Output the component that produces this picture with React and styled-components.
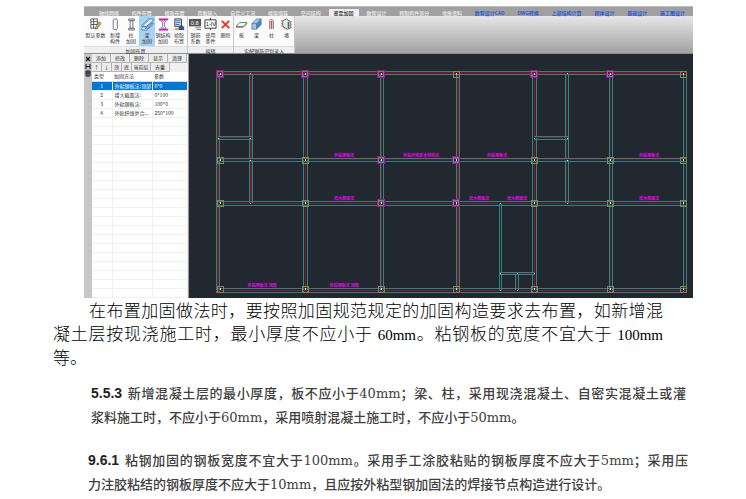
import React from 'react';
import styled, { createGlobalStyle } from 'styled-components';

const GlobalStyle = createGlobalStyle`
  * {
    box-sizing: border-box;
  }

  body {
    margin: 0;
    background: white;
    font-family: 'Noto Sans CJK SC', sans-serif;
  }

  button {
    margin: 0;
    border: 0;
    background: transparent;
    font-family: inherit;
    color: inherit;
  }
`;

const Page = styled.main`
  padding: 6px 53px 6px 53px;
`;

const AppWindow = styled.section`
  margin-left: 31px;
  font-size: 5px;
  color: #333;
`;

const TabBar = styled.nav`
  display: flex;
  justify-content: space-between;
  align-items: flex-end;
  height: 10px;
  padding: 0 3px 0 10px;
  background: #a0a0a0;
  border-top: 1px solid #bcc0bc;
`;

const Tab = styled.button`
  height: 7px;
  padding: 0 5px;
  font-size: 5px;
  font-weight: 500;
  line-height: 7px;
  white-space: nowrap;
  color: ${props => (props.$active ? '#222' : props.$link ? '#1450e0' : '#ececec')};
  background: ${props => (props.$active ? '#eeeeee' : 'transparent')};
`;

const Ribbon = styled.div`
  display: flex;
  height: 38px;
  background: linear-gradient(#e6e6e6, #a2a2a2);
  border-bottom: 1px solid #8a8c8e;
`;

const RibbonGroup = styled.div`
  display: flex;
  flex-direction: column;
  background: #fbfbfb;
  border-right: 1px solid #c8c8c8;
`;

const GroupTools = styled.div`
  display: flex;
  height: 30px;
`;

const GroupTitle = styled.div`
  height: 7px;
  line-height: 7px;
  text-align: center;
  white-space: nowrap;
  background: #efefef;
  border-top: 1px solid #dddddd;
`;

const toolWidths = { wide: '23px', medium: '16px', narrow: '15px' };

const Tool = styled.button`
  display: flex;
  flex-direction: column;
  align-items: center;
  width: ${props => toolWidths[props.$size]};
  padding: 2px 0 0;
  font-size: 5px;
  line-height: 6px;
  white-space: nowrap;
  color: #333;
  background: ${props => (props.$active ? '#a6d3f3' : 'transparent')};

  svg {
    display: block;
    width: 13px;
    height: 13px;
    margin-bottom: 1px;
  }
`;

const Workspace = styled.div`
  display: flex;
  background: #212830;
`;

const PaletteBar = styled.div`
  display: flex;
  flex-direction: column;
  width: 8px;
  padding: 2px 1px;
  background: #c6c6c6;
`;

const Palette = styled.div`
  flex: none;
  width: 97px;
  background: #f0f0f0;
  border-right: 1px solid #9a9a9a;
`;

const PaletteRow = styled.div`
  display: flex;
  height: 9px;
`;

const PaletteButton = styled.button`
  width: ${props => (props.$small ? '10px' : '19px')};
  padding: 0;
  font-size: 5px;
  line-height: 8px;
  background: #ececec;
  border-right: 1px solid #b4b4b4;
  border-bottom: 1px solid #b4b4b4;
`;

const MethodTable = styled.table`
  width: 100%;
  border-collapse: collapse;
  table-layout: fixed;
  background: white;
  font-size: 5px;
  line-height: 8px;
`;

const HeadCell = styled.th`
  width: ${props => props.$width};
  height: 9px;
  padding: 0 2px;
  font-weight: 400;
  text-align: left;
  border-bottom: 1px solid #d8d8d8;
`;

const Cell = styled.td`
  height: 9px;
  padding: 0 2px;
  overflow: hidden;
  white-space: nowrap;
  text-align: ${props => (props.$center ? 'center' : 'left')};
  color: ${props => (props.$selected ? 'white' : '#333')};
  background: ${props => (props.$selected ? '#0078d7' : 'white')};
  border-right: 1px solid #f0f0f0;
  border-bottom: 1px solid #f0f0f0;
`;

const Drawing = styled.svg`
  display: block;
  flex: 1;
  min-width: 0;
  font-family: 'Noto Sans CJK SC', sans-serif;
`;

const Paragraph = styled.p`
  margin: 2px 30px 0 0;
  font-family: 'Liberation Serif', 'Noto Sans CJK SC', serif;
  font-size: 17px;
  font-weight: 300;
  line-height: 23px;
  text-indent: 36px;
  text-align: justify;
  color: black;
`;

const Measure = styled.span`
  font-size: 15px;
  font-weight: 400;
`;

const Clause = styled.p`
  margin: ${props => (props.$first ? '11px 7px 0 38px' : '18px 5px 0 35px')};
  font-family: 'DejaVu Serif', 'Noto Sans CJK SC', serif;
  font-size: 13px;
  font-weight: 500;
  line-height: 24px;
  text-align: justify;
  color: #404040;
`;

const ClauseNumber = styled.strong`
  margin-right: 5px;
  font-family: 'Liberation Sans', sans-serif;
  font-size: 14px;
  color: #222;
`;

const Phrase = styled.span`
  white-space: nowrap;
`;

const icons = {
  params: (
    <>
      <path d="M2 1h7v10H2zM2 4h7M2 7h7M5 1v10" fill="#fff" stroke="#555" />
      <path d="M11 4l2 2-4 5-2 1 0-2z" fill="#d8a860" stroke="#444" strokeWidth=".6" />
    </>
  ),
  member: <rect x="4.500" y="1" width="4.500" height="11.500" rx="1.500" fill="#f4f7fa" stroke="#66788a" />,
  column: (
    <>
      <path d="M4 1h6v2H4zM4 11h6v2H4z" fill="#d4dae0" stroke="#4c5966" strokeWidth=".8" />
      <path d="M5.500 3h3v8h-3z" fill="#edf1f4" stroke="#4c5966" strokeWidth=".8" />
    </>
  ),
  beam: (
    <>
      <path d="M1 8L8 1h5v2L6 9H1zM1 11l2-2 3 3 7-7v2l-7 6H1z" fill="#e5f2fc" stroke="#2868a8" strokeWidth=".8" />
      <path d="M2 8L9 2M4 12l8-7" stroke="#2868a8" strokeWidth=".7" />
    </>
  ),
  steel: (
    <>
      <path d="M2 1.500h10M2 12.500h10" stroke="#e400e4" strokeWidth="1.800" />
      <path d="M4 3h6L8 5v4l2 2H4l2-2V5z" fill="#eee" stroke="#666" strokeWidth=".8" />
    </>
  ),
  pick: (
    <>
      <path d="M2 1h7v8H2z" fill="#dbe9f7" stroke="#333" />
      <path d="M3 3h5M3 5h5M3 7h4" stroke="#2871bd" />
      <path d="M9 7l3 3v3H6V10z" fill="#27558f" />
      <path d="M2 11h4v2H2z" fill="#d89030" />
    </>
  ),
  factor: (
    <>
      <rect x="0" y="1" width="13" height="8" fill="#555" />
      <text x="2" y="7" fontSize="6" fill="#fff" fontFamily="Liberation Sans, sans-serif">0.8</text>
      <path d="M7 10.500h6M8 12.500h5" stroke="#777" />
    </>
  ),
  usage: (
    <>
      <path d="M1 2h12v9H1z" fill="#fff" stroke="#333" />
      <text x="2" y="9" fontSize="6" fill="#111" fontFamily="Liberation Sans, sans-serif">1-IV</text>
      <path d="M7 0v2M7 11v2" stroke="#333" />
    </>
  ),
  remove: <path d="M3 3l8 8M11 3l-8 8" stroke="#ef3525" strokeWidth="2" />,
  slab: (
    <>
      <path d="M1 9l4-4h8l-4 4z" fill="#fff" stroke="#39815b" />
      <path d="M1 10h8l4-4" fill="none" stroke="#bd3e38" strokeWidth=".8" />
    </>
  ),
  box: (
    <>
      <path d="M2 6l5-5h5v6l-5 5H2z" fill="#a7c5ec" stroke="#47617d" strokeWidth=".7" />
      <path d="M2 6h5l5-5M7 6v6" fill="none" stroke="#47617d" strokeWidth=".7" />
      <path d="M7 6l5-5v6l-5 5z" fill="#4b80cb" />
    </>
  ),
  rebar: (
    <>
      <path d="M5 12V3l2-2 2 2v9" fill="#eee" stroke="#777" />
      <path d="M7 12V3" stroke="#e45045" strokeWidth="1.500" />
    </>
  ),
  wall: (
    <>
      <path d="M3 3l4-2 4 3v7l-3 1-5-3z" fill="#e7eee9" stroke="#476b59" />
      <path d="M9 4v7" stroke="#32765b" strokeWidth="1.500" />
      <path d="M2 2v7l5 4M12 3v8" fill="none" stroke="#da4941" strokeWidth=".9" strokeDasharray="2 1" />
    </>
  ),
};

const tabs = [
  '轴线网格', '构件布置', '楼板布置', '荷载输入', '自定义工况', '楼层组装', '空间结构',
  '鉴定加固', '数智设计', '预制构件拆分', '地质资料', '数智设计CAD', 'DWG转换',
  '上部结构计算', '砌体设计', '基础设计', '施工图设计',
];

const groups = [
  {
    title: '加固布置',
    size: 'medium',
    tools: [
      { icon: 'params', lines: ['默认参数'], size: 'wide' },
      { icon: 'member', lines: ['新增', '构件'] },
      { icon: 'column', lines: ['柱', '加固'] },
      { icon: 'beam', lines: ['梁', '加固'], active: true },
      { icon: 'steel', lines: ['钢结构', '加固'] },
      { icon: 'pick', lines: ['拾取', '布置'] },
    ],
  },
  {
    title: '编辑',
    size: 'narrow',
    tools: [
      { icon: 'factor', lines: ['钢筋', '系数'] },
      { icon: 'usage', lines: ['使用', '条件'] },
      { icon: 'remove', lines: ['删除'] },
    ],
  },
  {
    title: '实配钢筋识别录入',
    size: 'narrow',
    tools: [
      { icon: 'slab', lines: ['板'] },
      { icon: 'box', lines: ['梁'] },
      { icon: 'rebar', lines: ['柱'] },
      { icon: 'wall', lines: ['墙'] },
    ],
  },
];

const methods = [
  ['1', '外粘钢板法:顶部', '0*0'],
  ['2', '增大截面法:', '0*100'],
  ['3', '外粘钢板法:', '100*0'],
  ['4', '外贴纤维复合...', '250*100'],
];

const emptyRows = Array.from({ length: 20 }, (_, i) => i);

// edges: the two outlines of a beam; from/to: its extent along the other axis
const verticals = [
  { edges: [27, 30], from: 17, to: 239, red: '#7a1a21' },
  { edges: [60, 63], from: 17, to: 150, red: '#6d2028' },
  { edges: [114, 118], from: 17, to: 239, red: '#861820', thin: true },
  { edges: [191, 194], from: 17, to: 239, red: '#8d1820', thin: true },
  { edges: [267, 270], from: 17, to: 239, red: '#7d1820' },
  { edges: [343, 347], from: 17, to: 239, red: '#9c1219', thin: true },
  { edges: [376, 379], from: 17, to: 150, red: '#5c252c', thin: true },
  { edges: [420, 423], from: 17, to: 239, red: '#5c252c', thin: true },
  { edges: [494, 497], from: 17, to: 239, red: '#40282e', thin: true },
  { edges: [310, 312], from: 149, to: 237 },
  { edges: [326, 329], from: 219, to: 237, red: '#4c252c', thin: true },
];

const horizontals = [
  { edges: [17, 20], from: 27, to: 498, red: '#801219' },
  { edges: [82, 85], from: 29, to: 63, red: '#8d1820', thin: true },
  { edges: [82, 85], from: 345, to: 379, red: '#8d1820', thin: true },
  { edges: [104, 107], from: 29, to: 498, red: '#6d1820', thin: true },
  { edges: [147, 151], from: 29, to: 498, red: '#861820', thin: true },
  { edges: [234, 238], from: 27, to: 498, red: '#9c1219', thin: true },
  { edges: [218, 220], from: 311, to: 346, red: '#5c252c', thin: true },
];

const columnXs = [31, 116, 192, 267, 345, 421, 494];
const columnYs = [20, 106, 149, 235];
const magentaColumns = ['0-0', '1-0', '2-0', '4-0', '5-0', '2-1', '3-1', '2-2', '3-2'];

const joints = [
  [61, 19], [61, 84], [29, 84], [61, 106], [61, 149], [345, 84], [378, 84],
  [378, 19], [378, 106], [378, 149], [311, 149], [311, 219], [328, 219],
  [345, 219], [311, 236], [328, 236],
];

const notes = [
  [155, 103, '外粘钢板法'], [232, 103, '外粘纤维复合材料法'],
  [308, 103, '外粘钢板法'], [460, 103, '外粘钢板法'],
  [155, 146, '增大截面法'], [290, 146, '增大截面法'],
  [328, 146, '增大截面法'], [460, 146, '增大截面法'],
  [73, 233, '外粘钢板法 顶部'], [155, 233, '外粘钢板法 顶部'],
];

function Beam({ beam, vertical }) {
  const { edges: [low, high], from, to, red, thin } = beam;
  const line = pos => (vertical ? `M${pos + 0.5} ${from}V${to}` : `M${from} ${pos + 0.5}H${to}`);

  return (
    <g fill="none">
      {red && (
        <path
          d={line(thin ? Math.floor((low + high) / 2) : (low + high) / 2)}
          stroke={red}
          strokeWidth={thin ? 1 : 2}
        />
      )}
      <path d={line(low)} stroke="#2e8387" />
      <path d={line(high)} stroke="#2e8387" />
    </g>
  );
}

function FloorPlan() {
  return (
    <Drawing viewBox="0 0 504 244" preserveAspectRatio="xMinYMin meet" role="img">
      {verticals.map((beam, i) => <Beam key={i} beam={beam} vertical />)}
      {horizontals.map((beam, i) => <Beam key={i} beam={beam} />)}

      {columnYs.map((y, row) => columnXs.map((x, col) => {
        const magenta = magentaColumns.includes(`${col}-${row}`);
        return (
          <g key={`${col}-${row}`} fill="none">
            {magenta && <rect x={x - 3.5} y={y - 3.5} width="7" height="7" stroke="#a510aa" />}
            <rect
              x={x - 2.5}
              y={y - 2.5}
              width={magenta ? 5 : 6}
              height={magenta ? 5 : 6}
              stroke={magenta ? '#827a70' : '#84874f'}
            />
            <rect x={x} y={y - 1} width="1" height="2" fill="#a9f0ef" />
          </g>
        );
      }))}

      {joints.map(([x, y]) => (
        <rect key={`${x}-${y}`} x={x} y={y} width="1" height="1" fill="#cff" />
      ))}

      {notes.map(([x, y, text]) => (
        <text key={`${x}-${y}`} x={x} y={y} fontSize="4" fontWeight="700" fill="#e800ec" textAnchor="middle">
          {text}
        </text>
      ))}
    </Drawing>
  );
}

function MethodPalette() {
  return (
    <Palette>
      <PaletteRow>
        {['添加', '修改', '删除', '显示', '清理'].map(label => (
          <PaletteButton key={label}>{label}</PaletteButton>
        ))}
      </PaletteRow>
      <PaletteRow>
        {['↑', '↓', '顶', '底'].map(label => (
          <PaletteButton key={label} $small>{label}</PaletteButton>
        ))}
        <PaletteButton>当前层</PaletteButton>
        <PaletteButton>去重</PaletteButton>
      </PaletteRow>
      <MethodTable>
        <thead>
          <tr>
            <HeadCell $width="20px">类型</HeadCell>
            <HeadCell $width="40px">加固方法</HeadCell>
            <HeadCell>参数</HeadCell>
          </tr>
        </thead>
        <tbody>
          {methods.map(([id, name, value], i) => (
            <tr key={id}>
              <Cell $center $selected={i === 0}>{id}</Cell>
              <Cell $selected={i === 0}>{name}</Cell>
              <Cell $selected={i === 0}>{value}</Cell>
            </tr>
          ))}
          {emptyRows.map(row => (
            <tr key={row}>
              <Cell />
              <Cell />
              <Cell />
            </tr>
          ))}
        </tbody>
      </MethodTable>
    </Palette>
  );
}

function App() {
  return (
    <Page>
      <GlobalStyle />
      <AppWindow>
        <TabBar>
          {tabs.map((tab, i) => (
            <Tab key={tab} $active={i === 7} $link={i > 10}>{tab}</Tab>
          ))}
        </TabBar>

        <Ribbon>
          {groups.map(group => (
            <RibbonGroup key={group.title}>
              <GroupTools>
                {group.tools.map(tool => (
                  <Tool key={tool.icon} $size={tool.size || group.size} $active={tool.active}>
                    <svg viewBox="0 0 14 14" fill="none">{icons[tool.icon]}</svg>
                    {tool.lines.map(line => <span key={line}>{line}</span>)}
                  </Tool>
                ))}
              </GroupTools>
              <GroupTitle>{group.title}</GroupTitle>
            </RibbonGroup>
          ))}
        </Ribbon>

        <Workspace>
          <PaletteBar>
            <svg viewBox="0 0 6 22" fill="none" stroke="#111">
              <path d="M1 1l4 4M5 1L1 5" strokeWidth="1.200" />
              <path d="M1 8v5M5 8v5M1 10.500h4" />
              <path d="M1 15h4v5H1zM3 15v5M1 17h4" />
            </svg>
          </PaletteBar>
          <MethodPalette />
          <FloorPlan />
        </Workspace>
      </AppWindow>

      <Paragraph>
        在布置加固做法时，要按照加固规范规定的加固构造要求去布置，如新增混凝土层按现浇施工时，最小厚度不应小于{' '}
        <Measure>60mm</Measure>。粘钢板的宽度不宜大于 <Measure>100mm</Measure>等。
      </Paragraph>

      <Clause $first>
        <ClauseNumber>5.5.3</ClauseNumber>
        新增混凝土层的最小厚度，板不应小于40mm；梁、柱，采用现浇混凝土、自密实混凝土或灌<Phrase>浆料施工时</Phrase>，不应小于60mm，采用喷射混凝土施工时，不应小于50mm。
      </Clause>
      <Clause>
        <ClauseNumber>9.6.1</ClauseNumber>
        粘钢加固的钢板宽度不宜大于100mm。采用手工涂胶粘贴的钢板厚度不应大于5mm；采用压<Phrase>力注胶粘结</Phrase>的钢板厚度不应大于10mm，且应按外粘型钢加固法的焊接节点构造进行设计。
      </Clause>
    </Page>
  );
}

export default App;
